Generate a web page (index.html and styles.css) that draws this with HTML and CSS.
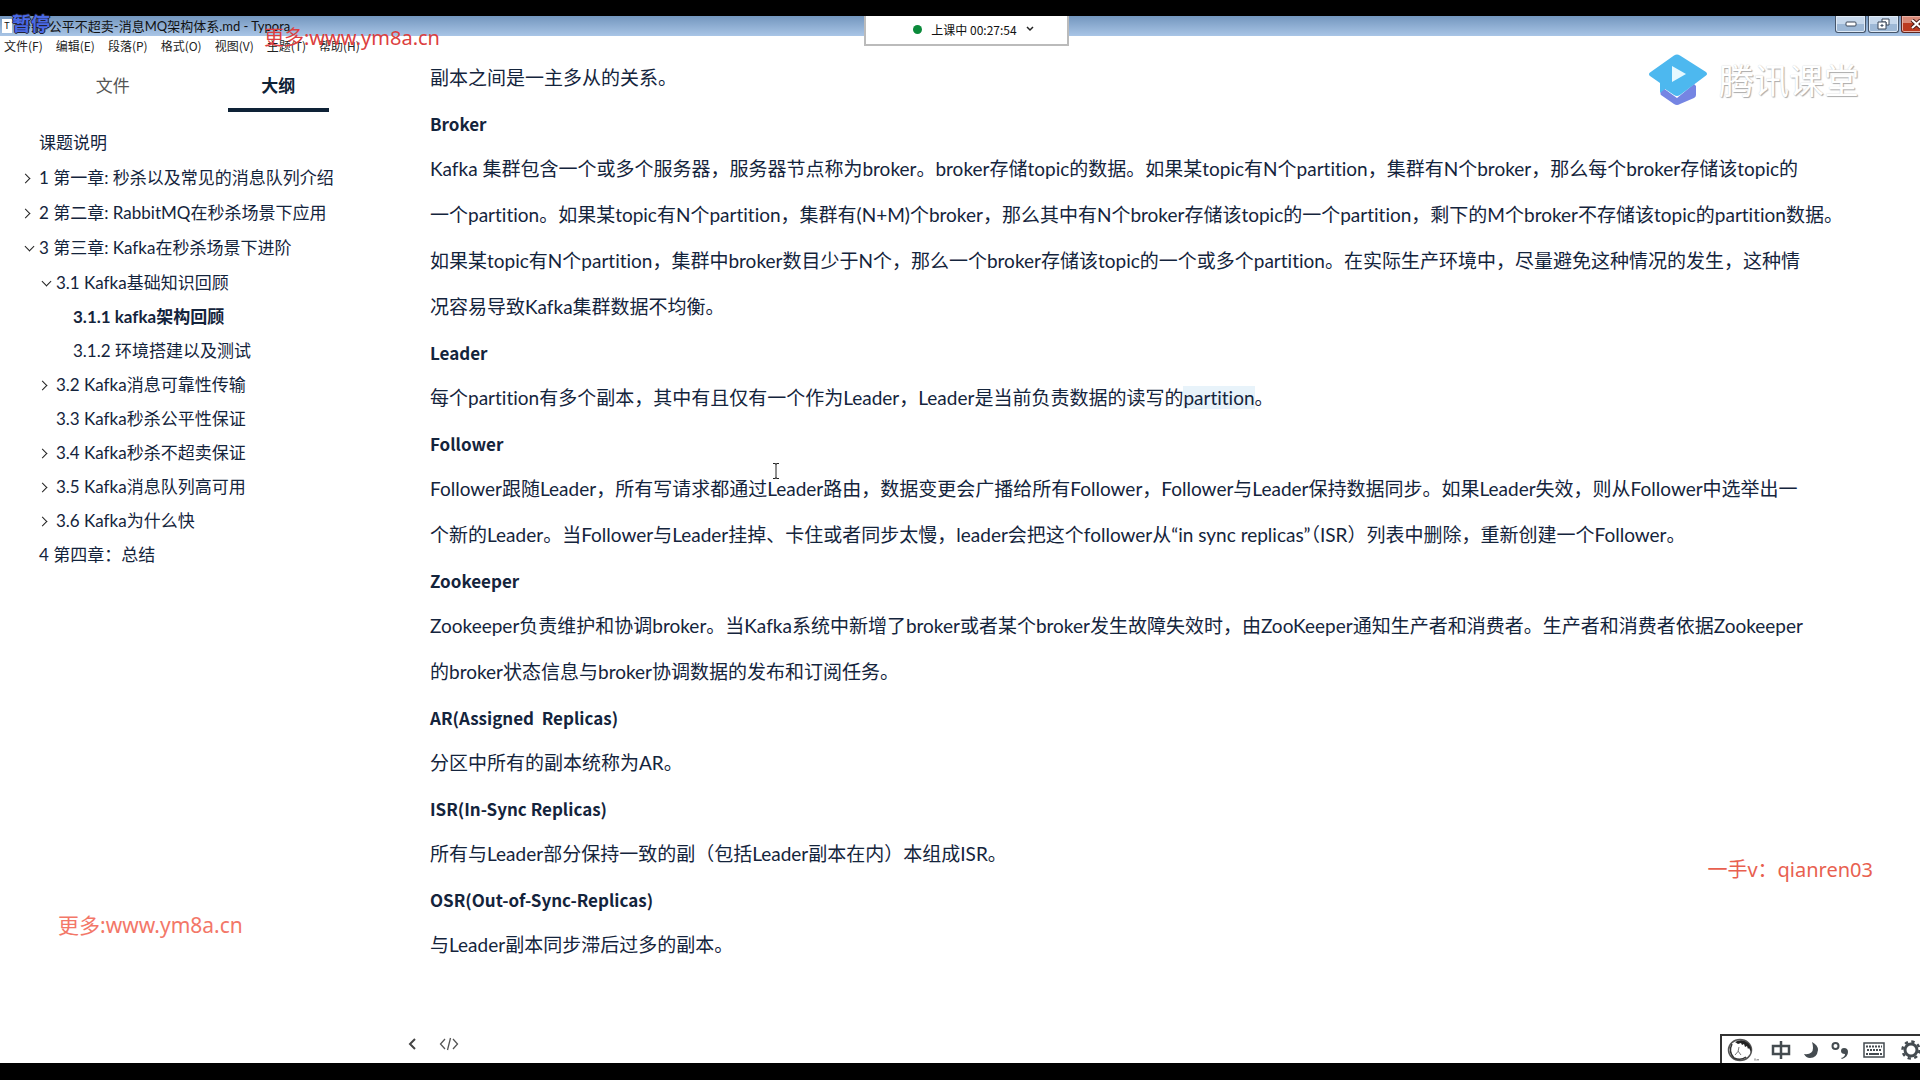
FILE: index.html
```
<!DOCTYPE html>
<html lang="zh-CN">
<head>
    <meta charset="utf-8">
    <title>消息MQ架构体系.md - Typora</title>
    <link rel="stylesheet" href="styles.css">
</head>

<body>

    <div id="window">
        <header id="titlebar">
            <span class="app_icon">T</span>
            <span class="title">秒杀-公平不超卖-消息MQ架构体系.md - Typora</span>
            <div class="win_btns">
                <button type="button" aria-label="最小化">
                    <svg width="12" height="6" viewBox="0 0 12 6"><rect x="1" y="1" width="10" height="4" rx="1" fill="#fff" stroke="#3a4758"/></svg>
                </button>
                <button type="button" aria-label="还原">
                    <svg width="13" height="12" viewBox="0 0 13 12"><path d="M5 1h7v6H9V4H5z" fill="#fff" stroke="#3a4758"/><path d="M1 4h8v7H1z" fill="#fff" stroke="#3a4758"/><path d="M4 7h2v1H4z" fill="#9fb8d5" stroke="#3a4758"/></svg>
                </button>
                <button type="button" class="close" aria-label="关闭">
                    <svg width="13" height="10" viewBox="0 0 13 10"><path d="M2 1l9 8M11 1L2 9" stroke="#4a1c18" stroke-width="4"/><path d="M2 1l9 8M11 1L2 9" stroke="#fff" stroke-width="2"/></svg>
                </button>
            </div>
        </header>

        <nav id="menu">
            <button type="button">文件(F)</button>
            <button type="button">编辑(E)</button>
            <button type="button">段落(P)</button>
            <button type="button">格式(O)</button>
            <button type="button">视图(V)</button>
            <button type="button">主题(T)</button>
            <button type="button">帮助(H)</button>
        </nav>

        <div id="main">
            <aside id="sidebar">
                <div class="tabs">
                    <button type="button">文件</button>
                    <button type="button" class="active">大纲</button>
                </div>
                <ul class="outline">
                    <li class="l1"><a href="#">课题说明</a></li>
                    <li class="l1 closed"><a href="#">1 第一章: 秒杀以及常见的消息队列介绍</a></li>
                    <li class="l1 closed"><a href="#">2 第二章: RabbitMQ在秒杀场景下应用</a></li>
                    <li class="l1 open"><a href="#">3 第三章: Kafka在秒杀场景下进阶</a></li>
                    <li class="l2 open"><a href="#">3.1 Kafka基础知识回顾</a></li>
                    <li class="l3 current"><a href="#">3.1.1 kafka架构回顾</a></li>
                    <li class="l3"><a href="#">3.1.2 环境搭建以及测试</a></li>
                    <li class="l2 closed"><a href="#">3.2 Kafka消息可靠性传输</a></li>
                    <li class="l2"><a href="#">3.3 Kafka秒杀公平性保证</a></li>
                    <li class="l2 closed"><a href="#">3.4 Kafka秒杀不超卖保证</a></li>
                    <li class="l2 closed"><a href="#">3.5 Kafka消息队列高可用</a></li>
                    <li class="l2 closed"><a href="#">3.6 Kafka为什么快</a></li>
                    <li class="l1"><a href="#">4 第四章：总结</a></li>
                </ul>
            </aside>

            <div id="editor">
                <article id="write">
                    <p>副本之间是一主多从的关系。</p>
                    <h4>Broker</h4>
                    <p>Kafka 集群包含一个或多个服务器，服务器节点称为broker。broker存储topic的数据。如果某topic有N个partition，集群有N个broker，那么每个broker存储该topic的<br>
                    一个partition。如果某topic有N个partition，集群有(N+M)个broker，那么其中有N个broker存储该topic的一个partition，剩下的M个broker不存储该topic的partition数据。<br>
                    如果某topic有N个partition，集群中broker数目少于N个，那么一个broker存储该topic的一个或多个partition。在实际生产环境中，尽量避免这种情况的发生，这种情<br>
                    况容易导致Kafka集群数据不均衡。</p>
                    <h4>Leader</h4>
                    <p>每个partition有多个副本，其中有且仅有一个作为Leader，Leader是当前负责数据的读写的<mark>partition</mark>。</p>
                    <h4>Follower</h4>
                    <p>Follower跟随Leader，所有写请求都通过Leader路由，数据变更会广播给所有Follower，Follower与Leader保持数据同步。如果Leader失效，则从Follower中选举出一<br>
                    个新的Leader。当Follower与Leader挂掉、卡住或者同步太慢，leader会把这个follower从“in sync replicas”（ISR）列表中删除，重新创建一个Follower。</p>
                    <h4>Zookeeper</h4>
                    <p>Zookeeper负责维护和协调broker。当Kafka系统中新增了broker或者某个broker发生故障失效时，由ZooKeeper通知生产者和消费者。生产者和消费者依据Zookeeper<br>
                    的broker状态信息与broker协调数据的发布和订阅任务。</p>
                    <h4>AR(Assigned&nbsp; Replicas)</h4>
                    <p>分区中所有的副本统称为AR。</p>
                    <h4>ISR(In-Sync Replicas)</h4>
                    <p>所有与Leader部分保持一致的副（包括Leader副本在内）本组成ISR。</p>
                    <h4>OSR(Out-of-Sync-Replicas)</h4>
                    <p>与Leader副本同步滞后过多的副本。</p>
                </article>
                <footer id="statusbar">
                    <button type="button" aria-label="隐藏侧边栏">
                        <svg width="8" height="12" viewBox="0 0 8 12"><path d="M7 1L2 6l5 5" fill="none" stroke="#444" stroke-width="2"/></svg>
                    </button>
                    <button type="button" aria-label="源代码模式">
                        <svg width="20" height="14" viewBox="0 0 20 14"><path d="M6 2L1.500 7L6 12M14 2l4.500 5L14 12M11.500 1l-3 12" fill="none" stroke="#555" stroke-width="1.300"/></svg>
                    </button>
                </footer>
            </div>
        </div>

        <!-- floating items -->
        <button type="button" id="class_state">
            <span class="dot"></span>上课中 00:27:54
            <svg width="8" height="6" viewBox="0 0 8 6"><path d="M1 1l3 3l3-3" fill="none" stroke="#222" stroke-width="1.500"/></svg>
        </button>

        <div id="brand">
            <svg width="60" height="52" viewBox="0 0 60 52">
                <path d="M13 37l2-3 14 10 17-14 2 2v9q0 2-2 3L32 50q-3 2-6 0L13 41q-1-1 0-4z" fill="#7585e3"/>
                <path d="M26 1.500q3-2 6 0L58 18q2 2 0 3.500L32 41q-3 2-6 0l-9-6-5 4V29L2 22q-2-2 0-3.500z" fill="#4db8ef"/>
                <path d="M24 12l14 8-14 8z" fill="#e6f8ff"/>
            </svg>
            <span>腾讯课堂</span>
        </div>

        <svg id="cursor" width="8" height="16" viewBox="0 0 8 16"><path d="M1 .5h2.500l.5 1 .5-1H7M4 1v14M1 15.500h2.500l.5-1 .5 1H7" fill="none" stroke="#222"/></svg>

        <div id="pause">暂停</div>
        <div class="mark mark_top">更多:www.ym8a.cn</div>
        <div class="mark mark_left">更多:www.ym8a.cn</div>
        <div class="mark mark_right">一手v：qianren03</div>

        <div id="ime">
            <svg width="32" height="24" viewBox="0 0 32 24">
                <ellipse cx="13" cy="12" rx="11.500" ry="10.500" fill="none" stroke="#555" stroke-width="1.500"/>
                <path d="M8 4q7-4 13 1q4 4 3 9l-2-4-1 1-1-3-2 1-1-3-2 1-1-2-3 1z" fill="#222"/>
                <path d="M5 6q-4 8 2 14q7 3 12-1" fill="none" stroke="#333" stroke-width="1.500"/>
                <path d="M12 9q0 5-4 8M11 13l3 4" fill="none" stroke="#777"/>
                <path d="M27 21h2M28 21v2M30 23v-2l1 1 1-1v2" fill="none" stroke="#888" stroke-width=".7"/>
            </svg>
            <svg width="20" height="20" viewBox="0 0 20 20"><path d="M2 6h16v8H2zM10 1v18" fill="none" stroke="#444b50" stroke-width="2.500"/></svg>
            <svg width="16" height="18" viewBox="0 0 16 18"><path d="M9 1q6 3 6 8q-1 8-8 8q-4 0-6-4q9 1 9-6q0-3-1-6z" fill="#444b50"/></svg>
            <svg width="18" height="18" viewBox="0 0 18 18"><circle cx="4.500" cy="5" r="3" fill="none" stroke="#444b50" stroke-width="2"/><path d="M10 17q4-1 4-4q-4 0-4-3q0-3 3-3q4 0 4 4q0 5-6 7z" fill="#444b50"/></svg>
            <svg width="26" height="16" viewBox="-2 0 26 16"><path d="M1 1h20v14H1z" fill="none" stroke="#444b50" stroke-width="1.500"/><path d="M3 4.500h16M4 8h15M3 12h2M17 12h2" stroke="#444b50" stroke-width="2" stroke-dasharray="2 1"/><path d="M6 12h10" stroke="#444b50" stroke-width="2"/></svg>
            <svg width="24" height="20" viewBox="-2 0 24 20"><circle cx="10" cy="10" r="6" fill="none" stroke="#444b50" stroke-width="3"/><circle cx="10" cy="10" r="8.500" fill="none" stroke="#444b50" stroke-width="2.500" stroke-dasharray="3.340 3.340"/></svg>
        </div>
    </div>

</body>
</html>
```
FILE: styles.css
```
* {
    box-sizing: border-box;
}

body {
    margin: 0;
    background-color: #000;
    color: #14243c;
    font-family: Lato, "Noto Sans CJK SC", sans-serif;
    font-size: 19px;
    font-variant-ligatures: none;
}

button {
    padding: 0;
    border: none;
    background: none;
    color: inherit;
    font-family: inherit;
    font-size: inherit;
}

svg {
    flex: none;
}

/* black bars above and below the window */
#window {
    position: relative;
    display: flex;
    flex-direction: column;
    min-height: calc(100vh - 33px);
    margin: 16px 0 17px;
    background-color: #fff;
    overflow-x: clip;
}

#titlebar {
    display: flex;
    align-items: center;
    height: 20px;
    padding-left: 2px;
    gap: 6px;
    background: linear-gradient(#7396be, #a9c5e6);
    color: #111;
    font-size: 13px;
    line-height: 20px;
}

    #titlebar .app_icon {
        width: 10px;
        height: 14px;
        background-color: #fff;
        font-size: 9px;
        line-height: 14px;
        text-align: center;
    }

.win_btns {
    display: flex;
    gap: 2px;
    height: 20px;
    margin-left: auto;
    margin-right: -12px;
}

    .win_btns button {
        display: flex;
        align-items: center;
        justify-content: center;
        width: 31px;
        height: 17px;
        border: 1px solid #46566b;
        border-top: none;
        border-radius: 0 0 3px 3px;
        background: linear-gradient(#c6d8ec 50%, #9db8d6 50%);
        box-shadow: inset 0 0 0 1px #dfeaf6;
    }

    .win_btns .close {
        border-color: #5c2620;
        background: linear-gradient(#d98a78 45%, #bb3a20 45%);
        box-shadow: inset 0 0 0 1px #e8b0a4;
    }

#menu {
    display: flex;
    gap: 13px;
    height: 19px;
    padding-left: 4px;
    color: #222;
    font-family: "Noto Sans CJK SC", sans-serif;
    font-size: 12px;
}

#main {
    display: flex;
    flex: 1;
}

#sidebar {
    width: 392px;
    flex: none;
    padding: 8px 31px 0 30px;
}

.tabs {
    display: flex;
    font-size: 17px;
}

    .tabs button {
        width: 102px;
        height: 49px;
        margin: 0 32px;
        border-bottom: 4px solid transparent;
        color: #555;
        line-height: 46px;
    }

    .tabs .active {
        border-color: #0e2236;
        color: #0e2236;
        font-weight: bold;
    }

.outline {
    margin: 14px 0 0 -30px;
    padding: 0;
    list-style: none;
    font-size: 17px;
}

    .outline li {
        display: flex;
        height: 34px;
        line-height: 34px;
        white-space: nowrap;
    }

    .outline a {
        color: inherit;
        text-decoration: none;
    }

    .outline .l1 {
        height: 35px;
        padding-left: 22px;
    }

    .outline .l2 {
        padding-left: 39px;
    }

    .outline .l3 {
        padding-left: 56px;
    }

    .outline .current {
        font-weight: bold;
    }

    /* expand arrows */
    .outline li::before {
        content: "";
        width: 6px;
        height: 6px;
        margin: 14px 10px 0 0;
        border: solid transparent;
        border-width: 1px 1px 0 0;
    }

    .outline .closed::before {
        border-color: #222;
        transform: rotate(45deg);
    }

    .outline .open::before {
        margin: 12px 6px 0 4px;
        border-color: #222;
        transform: rotate(135deg);
    }

#editor {
    display: flex;
    flex: 1;
    flex-direction: column;
    min-width: 0;
}

#write {
    flex: 1;
    padding-left: 38px;
    line-height: 46px;
    white-space: nowrap;
}

    #write p {
        margin: 0;
    }

    #write h4 {
        margin: 0;
        font-family: "Noto Sans CJK SC", sans-serif;
        font-size: 17px;
        font-weight: bold;
        line-height: 45px;
    }

    #write mark {
        background-color: #e8f3fa;
        color: inherit;
    }

#statusbar {
    display: flex;
    align-items: center;
    gap: 23px;
    height: 38px;
    padding-left: 16px;
}

    #statusbar button {
        display: flex;
    }

#class_state {
    position: absolute;
    top: 0;
    left: 45%;
    display: flex;
    align-items: center;
    justify-content: center;
    gap: 9px;
    width: 205px;
    height: 30px;
    padding: 0 0 2px 14px;
    border: 2px solid #bbb;
    border-top: none;
    background-color: #fff;
    color: #111;
    font-family: "Noto Sans CJK SC", sans-serif;
    font-size: 12px;
}

    #class_state .dot {
        width: 9px;
        height: 9px;
        border-radius: 50%;
        background-color: #0a8a3a;
    }

#brand {
    position: absolute;
    top: 38px;
    right: 61px;
    display: flex;
    align-items: center;
    gap: 11px;
    color: #fff;
    font-size: 35px;
    line-height: 52px;
    text-shadow: 1px 1px 1px #aaa, 0 0 1px #ccc;
}

#cursor {
    position: absolute;
    top: 447px;
    left: 772px;
}

#pause {
    position: absolute;
    top: -4px;
    left: 12px;
    color: #4a6ae6;
    font-size: 19px;
    font-weight: bold;
    line-height: 24px;
    text-shadow: 1px 0 #223, -1px 0 #223, 0 1px #223, 0 -1px #223;
}

.mark {
    position: absolute;
    color: #f37768;
    font-family: "Noto Sans", "Noto Sans CJK SC", sans-serif;
    font-size: 20px;
    line-height: 28px;
}

.mark_top {
    top: 8px;
    left: 264px;
    color: #dc3f40;
}

.mark_left {
    left: 58px;
    bottom: 124px;
    font-size: 21px;
}

.mark_right {
    right: 47px;
    bottom: 179px;
    color: #e8604f;
}

#ime {
    position: absolute;
    right: -3px;
    bottom: 0;
    display: flex;
    align-items: center;
    gap: 12px;
    height: 29px;
    padding-left: 5px;
    border: solid #333;
    border-width: 2px 0 0 2px;
    background-color: #fff;
}
```
